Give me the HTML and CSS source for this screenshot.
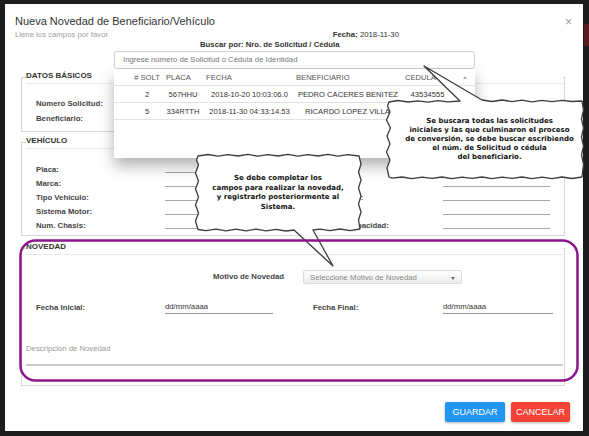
FILE: index.html
```html
<!DOCTYPE html>
<html lang="es">
<head>
<meta charset="utf-8">
<title>Nueva Novedad</title>
<link rel="stylesheet" href="styles.css">
</head>
<body>
<div class="screen">
  <div class="bg-btn"></div>
  <div class="modal">
    <div class="modal-header">
      <div class="title-block">
        <h1 class="title">Nueva Novedad de Beneficiario/Vehículo</h1>
        <p class="subtitle">Llene los campos por favor</p>
      </div>
      <div class="fecha"><b>Fecha:</b> 2018-11-30</div>
      <div class="close">×</div>
    </div>

    <div class="search">
      <div class="search-label">Buscar por: Nro. de Solicitud / Cédula</div>
      <div class="search-input">Ingrese número de Solicitud o Cédula de Identidad</div>
      <div class="dropdown">
        <div class="dd-row dd-head">
          <span class="c1">#&nbsp;SOLT</span>
          <span class="c2">PLACA</span>
          <span class="c3">FECHA</span>
          <span class="c4">BENEFICIARIO</span>
          <span class="c5">CEDULA</span>
          <span class="scroll-up"></span>
        </div>
        <div class="dd-row">
          <span>2</span>
          <span>567HHU</span>
          <span>2018-10-20 10:03:06.0</span>
          <span>PEDRO CACERES BENITEZ</span>
          <span>43534555</span>
          <span></span>
        </div>
        <div class="dd-row">
          <span>5</span>
          <span>334RTTH</span>
          <span>2018-11-30 04:33:14.53</span>
          <span class="c4b">RICARDO LOPEZ VILLA</span>
          <span></span>
          <span></span>
        </div>
      </div>
    </div>

    <fieldset class="fs fs-datos">
      <legend>DATOS BÁSICOS</legend>
      <div class="rows rows-datos">
        <div class="frow frow-datos">
          <span class="lbl">Número Solicitud:</span>
        </div>
        <div class="frow frow-datos">
          <span class="lbl">Beneficiario:</span>
        </div>
      </div>
    </fieldset>

    <fieldset class="fs fs-veh">
      <legend>VEHÍCULO</legend>
      <div class="rows rows-veh">
        <div class="frow">
          <span class="lbl">Placa:</span><span class="val"></span><span></span>
          <span></span><span class="val"></span>
        </div>
        <div class="frow">
          <span class="lbl">Marca:</span><span class="val"></span><span></span>
          <span></span><span class="val"></span>
        </div>
        <div class="frow">
          <span class="lbl">Tipo Vehiculo:</span><span class="val"></span><span></span>
          <span class="lbl lbl-r3">Uso:</span><span class="val"></span>
        </div>
        <div class="frow">
          <span class="lbl">Sistema Motor:</span><span class="val"></span><span></span>
          <span></span><span class="val"></span>
        </div>
        <div class="frow">
          <span class="lbl">Num. Chasis:</span><span class="val"></span><span></span>
          <span class="lbl lbl-r5">Capacidad:</span><span class="val"></span>
        </div>
      </div>
    </fieldset>

    <fieldset class="fs fs-nov">
      <legend>NOVEDAD</legend>
      <div class="motivo-row">
        <span class="lbl">Motivo de Novedad</span>
        <div class="select"><span>Seleccione Motivo de Novedad</span><span class="caret"></span></div>
      </div>
      <div class="frow frow-fecha">
        <span class="lbl">Fecha Inicial:</span><span class="date">dd/mm/aaaa</span><span></span>
        <span class="lbl">Fecha Final:</span><span class="date">dd/mm/aaaa</span>
      </div>
      <div class="desc">Descripcion de Novedad</div>
    </fieldset>

    <div class="footer">
      <button class="btn btn-save">GUARDAR</button>
      <button class="btn btn-cancel">CANCELAR</button>
    </div>
  </div>

  <svg class="overlay" viewBox="0 0 589 436" width="589" height="436">
    <path class="bubble" d="M389,102 L398,100.5 L408,102 L418,100.8 L428,102.2 L438,100.6 L448,101.8 L460,101 L424,66 L482,100 L492,101.5 L502,100 L512,101.6 L522,100.2 L532,101.8 L542,100.4 L552,101.7 L562,100.3 L572,101.5 L582,101 L583.5,110 L581.5,119 L583.5,128 L581.5,137 L583.5,146 L581.5,155 L583.5,164 L582,177 L572,178.5 L562,177 L552,178.6 L542,177.2 L532,178.6 L522,177 L512,178.4 L502,177.2 L492,178.6 L482,177 L472,178.4 L462,177.2 L452,178.6 L442,177 L432,178.4 L422,177.2 L412,178.6 L402,177 L392,178.2 L389,177 L387,168 L390,160 L386.5,152 L390,144 L387,136 L390.5,128 L386.5,120 L390,112 L387.5,106 Z"/>
    <path class="bubble" d="M198,156 L208,154.5 L218,156.2 L228,154.6 L238,156 L248,154.4 L258,156.2 L268,154.6 L278,156 L288,154.4 L298,156.2 L308,154.6 L318,156 L328,154.4 L338,156.2 L348,154.6 L359,156 L361,164 L358.5,172 L361,180 L358.5,188 L361,196 L358.5,204 L361,212 L358.5,220 L360,229 L350,230.6 L340,229 L330,230.6 L320,229.2 L313,230 L333,266 L294,230 L286,231 L276,229.4 L266,230.8 L256,229.2 L246,230.8 L236,229.2 L226,230.8 L216,229.2 L206,230.6 L198,229.5 L195.5,221 L198.5,213 L195.5,205 L198.5,197 L195.5,189 L198.5,181 L195.5,173 L198.5,165 L196.5,160 Z"/>
    <rect class="highlight" x="20.5" y="240.5" width="557" height="140" rx="15" ry="15"/>
  </svg>

  <div class="bubble-text bt1">Se buscara todas las solicitudes<br>iniciales y las que culminaron el proceso<br>de conversión, se debe buscar escribiendo<br>el núm. de Solicitud o cédula<br>del beneficiario.</div>
  <div class="bubble-text bt2">Se debe completar los<br>campos para realizar la novedad,<br>y registrarlo posteriormente al<br>Sistema.</div>
</div>
</body>
</html>
```

FILE: styles.css
```css
* { box-sizing: border-box; }
html, body { margin: 0; padding: 0; }
body {
  background: #1d1d1d;
  font-family: "Liberation Sans", Arial, sans-serif;
  color: #333;
}
.screen {
  position: relative;
  width: 589px;
  height: 436px;
  overflow: hidden;
  padding: 4px 6px 5px 5px;
}
.bg-btn {
  position: absolute;
  right: 0;
  top: 24px;
  width: 5px;
  height: 22px;
  background: #5a1d1d;
}
.modal {
  background: #fff;
  width: 578px;
  height: 427px;
  padding: 10px 11px 9px 10px;
  display: flex;
  flex-direction: column;
}
.modal-header { display: flex; align-items: flex-start; }
.title-block { flex: 1; }
.title {
  margin: 0;
  font-size: 11px;
  line-height: 14px;
  font-weight: normal;
  color: #333;
}
.subtitle {
  margin: 1.5px 0 0;
  font-size: 7.75px;
  line-height: 9px;
  color: #a0a0a0;
}
.fecha {
  align-self: flex-end;
  font-size: 7.75px;
  line-height: 9px;
  margin-right: 166px;
  color: #333;
}
.close {
  font-size: 12px;
  line-height: 14px;
  color: #999;
  margin-top: 1px;
}

/* search */
.search {
  position: relative;
  margin: 1.5px 0 0 99px;
  width: 361px;
}
.search-label {
  font-weight: bold;
  font-size: 7.75px;
  line-height: 10px;
  padding-left: 86px;
}
.search-input {
  margin-top: 1px;
  height: 18px;
  border: 1px solid #d0d0d0;
  border-radius: 3px;
  padding-left: 8px;
  font-size: 7.75px;
  line-height: 16px;
  color: #777;
}
.dropdown {
  position: absolute;
  top: 100%;
  left: 0;
  width: 361px;
  height: 89px;
  background: #fff;
  box-shadow: 0 8px 14px rgba(0, 0, 0, 0.3);
  z-index: 2;
}
.dd-row {
  display: grid;
  grid-template-columns: 32px 40px 93px 104px 55px 1fr;
  padding-left: 17px;
  height: 17px;
  align-items: center;
  border-bottom: 1px solid #e2e2e2;
  font-size: 7.6px;
  color: #333;
  text-align: center;
  white-space: nowrap;
}
.dd-head { color: #555; }
.dd-head .c2, .dd-head .c3, .dd-head .c4, .dd-head .c5 { text-align: left; }
.dd-head .c2 { padding-left: 3px; }
.dd-head .c3 { padding-left: 3px; }
.dd-head .c4 { padding-left: 0; }
.dd-head .c5 { padding-left: 5px; }
.c4b { text-align: left; padding-left: 9px; }
.scroll-up {
  justify-self: center;
  width: 0;
  height: 0;
  border-left: 2.5px solid transparent;
  border-right: 2.5px solid transparent;
  border-bottom: 3px solid #aaa;
}

/* fieldsets */
.fs {
  margin: 2px 7px 0 6px;
  padding: 0 1px 5px 4px;
  border: 1px solid #d6d6d6;
  min-width: 0;
}
.fs legend {
  width: 100%;
  padding: 0 0 2px;
  font-size: 8px;
  line-height: 10px;
  font-weight: bold;
  color: #333;
  border-bottom: 1px solid #e8e8e8;
}
.fs-veh { margin-top: 4px; padding-bottom: 2px; }
.fs-nov { margin-top: 6px; padding-bottom: 19px; }

.rows-datos { margin-top: 12px; }
.rows-veh { margin-top: 14px; }
.frow {
  display: grid;
  grid-template-columns: 129px 108px 40px 130px 110px;
  padding-left: 10px;
  height: 14px;
  align-items: start;
}
.frow-datos { height: 15px; }
.lbl {
  font-weight: bold;
  font-size: 7.75px;
  line-height: 14px;
  color: #444;
  white-space: nowrap;
}
.frow-datos .lbl { line-height: 15px; }
.lbl-r3 { padding-left: 33px; }
.lbl-r5 { padding-left: 34px; }
.val {
  height: 10px;
  border-bottom: 1px solid #a8a8a8;
  margin-right: 3px;
}

.motivo-row {
  display: grid;
  grid-template-columns: 90px 159px;
  padding-left: 187px;
  margin-top: 15px;
  height: 14px;
  align-items: center;
}
.select {
  height: 14px;
  border: 1px solid #ddd;
  border-radius: 2px;
  background: linear-gradient(#ffffff, #ececec);
  padding: 0 6px;
  display: flex;
  align-items: center;
  justify-content: space-between;
  font-size: 7.75px;
  color: #888;
}
.caret {
  width: 0;
  height: 0;
  border-left: 2px solid transparent;
  border-right: 2px solid transparent;
  border-top: 3px solid #666;
  margin-top: 2px;
}
.frow-fecha { margin-top: 17px; }
.date {
  height: 13px;
  border-bottom: 1px solid #999;
  font-size: 7.75px;
  line-height: 12px;
  color: #333;
}
.desc {
  margin-top: 29px;
  height: 22px;
  border-bottom: 2px solid #c9c9c9;
  font-size: 7.75px;
  line-height: 10px;
  color: #999;
}

/* footer */
.footer {
  margin-top: 16px;
  display: flex;
  justify-content: flex-end;
  gap: 6px;
  padding-right: 2px;
}
.btn {
  height: 20px;
  border: none;
  border-radius: 2px;
  padding: 0;
  font-family: "Liberation Sans", Arial, sans-serif;
  font-size: 9px;
  line-height: 20px;
  color: #fff;
  text-align: center;
  box-shadow: 0 1px 3px rgba(0, 0, 0, 0.3);
}
.btn-save { width: 60px; background: #2196f3; }
.btn-cancel { width: 59px; background: #f44336; }

/* annotations */
.overlay {
  position: absolute;
  left: 0;
  top: 0;
  z-index: 5;
  pointer-events: none;
}
.bubble {
  fill: #fff;
  stroke: #3d3d3d;
  stroke-width: 1.3;
  stroke-linejoin: round;
}
.highlight {
  fill: none;
  stroke: #8b168b;
  stroke-width: 2.5;
}
.bubble-text {
  position: absolute;
  z-index: 6;
  font-family: "DejaVu Sans", Verdana, sans-serif;
  font-weight: bold;
  font-size: 7px;
  color: #111;
  text-align: center;
  white-space: nowrap;
}
.bt1 { left: 392px; top: 117px; width: 195px; line-height: 9.1px; }
.bt2 { left: 198px; top: 174px; width: 160px; line-height: 9.6px; }
```
